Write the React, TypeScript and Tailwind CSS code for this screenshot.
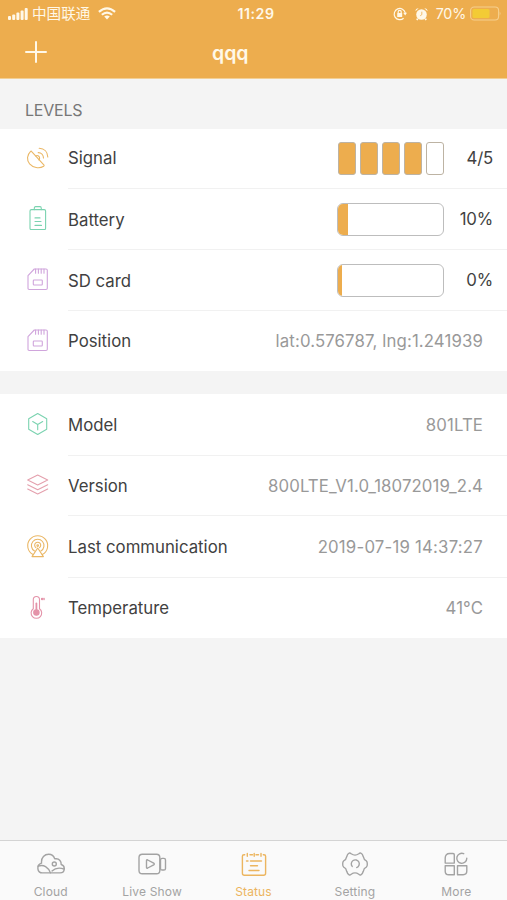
import type { ReactNode } from "react";

const ORANGE = "#edad4e";

function Icon({ color, children }: { color: string; children: ReactNode }) {
  return (
    <svg
      className="-mt-[3px] size-6 shrink-0"
      viewBox="0 0 24 24"
      fill="none"
      stroke={color}
      strokeWidth="1.1"
      strokeLinecap="round"
      strokeLinejoin="round"
    >
      {children}
    </svg>
  );
}

const DishIcon = () => (
  <Icon color="#eab765">
    <path d="M4.6 5.4C1 9 .4 14 3.600 17.800C7 21.600 13 23 17.700 20.200C18.300 19.800 18.200 19.400 17.800 18.900L5.700 5.600C5.300 5.100 5 5 4.600 5.400Z" />
    <path d="M9.800 9.900C11.600 8.600 14 10.500 13.600 12.600C13.500 13.200 13.300 13.600 12.900 13.900" />
    <path d="M12.200 6.600C15.300 6.600 17.400 9 17.500 12" />
    <path d="M13.200 2.300C18.300 2.600 21.700 6 21.800 10.900" />
  </Icon>
);

const BatteryIcon = () => (
  <Icon color="#7bd3b0">
    <rect x="4" y="3.600" width="15.600" height="20" rx="1.400" />
    <path d="M8.300 3.600V2.400Q8.300.6 9.600.6H14Q15.300.6 15.300 2.400V3.600M9 11.900H14M9 15.500H15M9 19.400H15.500" />
  </Icon>
);

const CardIcon = () => (
  <Icon color="#d0a5dc">
    <path d="M8.300 2H20Q21.300 2 21.300 3.300V21.300Q21.300 22.500 20 22.500H3.200Q2 22.500 2 21.300V8.700Z" />
    <path d="M9.600 2V6.300M12.400 2V6.300M15.200 2V6.300M18 2V6.300" />
    <rect x="7.300" y="13" width="9" height="5" rx=".7" />
  </Icon>
);

const BoxIcon = () => (
  <Icon color="#7bd3b0">
    <path d="M11.700 1.600L20.700 6.800V17.200L11.700 22.400L2.700 17.200V6.800Z" />
    <path d="M6.700 9.600L11.700 12.500L16.700 9.600M11.700 12.500V17.800" />
  </Icon>
);

const LayersIcon = () => (
  <Icon color="#e4a0ad">
    <path d="M11.700 2L21.700 7L11.700 12L1.700 7Z" />
    <path d="M1.700 11.700L11.700 16.700L21.700 11.700M1.700 16L11.700 21L21.700 16" />
  </Icon>
);

const AntennaIcon = () => (
  <Icon color="#eab765">
    <path d="M7.100 20.600A10 10 0 1 1 16.300 20.600" />
    <path d="M8.500 17A6.300 6.300 0 1 1 14.900 17" />
    <path d="M9.900 13.600A3 3 0 1 1 13.500 13.600" />
    <circle cx="11.700" cy="11.600" r=".8" />
    <path d="M11.700 14L17.400 22.600H6Z" />
  </Icon>
);

const ThermometerIcon = () => (
  <Icon color="#e493a9">
    <path d="M7.300 13.700V4.600A3.100 3.100 0 0 1 13.500 4.600V13.700A5.300 5.300 0 1 1 7.300 13.700Z" />
    <circle cx="10.400" cy="17.500" r="2.700" fill="#e493a9" />
    <path d="M10.400 8.500V15" strokeWidth="1.800" />
    <circle cx="16.100" cy="4" r=".7" />
    <path d="M17.800 3.400H18.200V4.600H17.800" />
  </Icon>
);

function Row({ icon, label, height, line = true, children }: {
  icon: ReactNode;
  label: string;
  height: string;
  line?: boolean;
  children: ReactNode;
}) {
  return (
    <div className={`flex items-center pl-[26px] ${height}`}>
      {icon}
      <div
        className={`ml-[18px] flex h-full flex-1 items-center justify-between border-b ${line ? "border-[#f1f1f1]" : "border-transparent"}`}
      >
        <span className={`text-[16.800px] text-[#414141] ${label === "Signal" ? "pt-px" : "pt-[3px]"}`}>{label}</span>
        {children}
      </div>
    </div>
  );
}

const Value = ({ children, spacing }: { children: ReactNode; spacing: string }) => (
  <span className={`pt-[3px] pr-[24px] text-[16.800px] text-[#999] ${spacing}`}>{children}</span>
);

const Level = ({ children }: { children: ReactNode }) => (
  <span className="w-[63px] pt-px pr-[14px] text-right text-[16.800px] tracking-[-0.200px] text-[#414141]">{children}</span>
);

function Gauge({ fill }: { fill: string }) {
  return (
    <div className="ml-auto h-[33px] w-[107px] overflow-hidden rounded-[6px] border border-[#bdbdbd]">
      <div className={`h-full bg-[#edad4e] ${fill}`} />
    </div>
  );
}

function Tab({ label, active, children }: { label: string; active?: boolean; children: ReactNode }) {
  return (
    <div className={`flex flex-1 flex-col items-center pt-[9px] ${active ? "text-[#ecb55f]" : "text-[#a3a3a3]"}`}>
      <svg
        className="h-7 w-8"
        viewBox="0 0 32 28"
        fill="none"
        stroke="currentColor"
        strokeWidth="1.400"
        strokeLinecap="round"
        strokeLinejoin="round"
      >
        {children}
      </svg>
      <span className="mt-[6px] text-[12px] leading-[16px] tracking-[0.150px]">{label}</span>
    </div>
  );
}

export default function App() {
  return (
    <div className="flex h-[900px] w-[507px] flex-col overflow-hidden bg-[#f4f4f4] font-['Inter','Noto_Sans_CJK_SC',sans-serif]">
      <header className="h-[79px] shrink-0 border-b border-[#f3cf94] bg-[#edad4e] text-[#fff8e8]">
        <div className="grid h-[27px] grid-cols-3 items-center pr-[6px] pl-2">
          <div className="flex items-center">
            <svg className="mr-1 h-3 w-5" viewBox="0 0 20 12" fill="currentColor">
              <rect x="0" y="8" width="3" height="4" rx="1" />
              <rect x="4.200" y="6.500" width="3" height="5.500" rx="1" />
              <rect x="8.400" y="4.500" width="3" height="7.500" rx="1" />
              <rect x="12.600" y="2.500" width="3" height="9.500" rx="1" />
              <rect x="16.700" y="0" width="3" height="12" rx="1" />
            </svg>
            <span className="text-[14.600px] leading-5 whitespace-nowrap">中国联通</span>
            <svg className="ml-2 h-[13px] w-[18px]" viewBox="0 0 18 13" fill="none" stroke="currentColor" strokeWidth="2.100">
              <path d="M.9 4.900Q9-2.200 17.100 4.900M3.800 7.800Q9 3.300 14.200 7.800" />
              <path d="M6.200 9.600Q9 7.400 11.800 9.600L9 12.400Z" fill="currentColor" stroke="none" />
            </svg>
          </div>
          <span className="pt-px pl-[3px] text-center text-[14.200px] font-semibold tracking-[0.500px]">11:29</span>
          <div className="flex items-center justify-end">
            <svg className="mr-[8px] size-[14px]" viewBox="0 0 14 14" fill="none" stroke="currentColor" strokeWidth="1.200">
              <path d="M12.300 6A5.600 5.600 0 1 0 10.600 11.200" />
              <path d="M10.200 5.700H14L12.200 8.500Z" fill="currentColor" stroke="none" />
              <rect x="4.200" y="6" width="5" height="4" rx=".5" fill="currentColor" stroke="none" />
              <path d="M5.200 6V4.800A1.500 1.500 0 0 1 8.200 4.800V6" />
            </svg>
            <svg className="mr-[8px] h-[14px] w-[13px]" viewBox="0 0 13 14" fill="currentColor">
              <circle cx="6.500" cy="7.500" r="5.300" />
              <path d="M.5 4.200Q.4 1.300 3.700 1.200ZM12.500 4.200Q12.600 1.300 9.300 1.200ZM2 11L3.500 12.500L2.300 13.500L1.200 12.500ZM11 11L9.500 12.500L10.700 13.500L11.800 12.500Z" />
              <path d="M6.800 4.700V7.700L5.200 8.800" fill="none" stroke={ORANGE} strokeWidth=".8" />
            </svg>
            <span className="pt-px text-[14.300px] tracking-[-0.200px]">70%</span>
            <svg className="ml-1 h-[15px] w-[31px]" viewBox="0 0 31 15" fill="none">
              <rect x=".6" y="1" width="28" height="13" rx="3.500" stroke="#f6cf8d" strokeWidth="1.100" />
              <rect x="2.500" y="3" width="17" height="9" rx="1.500" fill="#f3cb35" />
              <path d="M29.700 5.400Q31.200 7.500 29.700 9.600Z" fill="#f6cf8d" />
            </svg>
          </div>
        </div>
        <div className="flex h-[50px] items-center">
          <svg className="ml-[25px] size-[22px]" viewBox="0 0 22 22" stroke="currentColor" strokeWidth="2" strokeLinecap="round">
            <path d="M11 1V21M1 11H21" />
          </svg>
          <h1 className="ml-[165px] pt-[3px] text-[19.500px] font-semibold">qqq</h1>
        </div>
      </header>

      <main className="flex-1">
        <h2 className="flex h-[50px] items-center pt-[12px] pl-[25px] text-[16px] tracking-[-0.200px] text-[#777]">LEVELS</h2>
        <section className="bg-white">
          <Row icon={<DishIcon />} label="Signal" height="h-[60px]">
            <div className="ml-auto flex gap-[4px]">
              {[1, 2, 3, 4, 5].map((n) => (
                <i
                  key={n}
                  className={`h-[33px] w-[18px] rounded-[3px] border border-[#bdb3a3] ${n < 5 ? "bg-[#edad4e]" : "bg-white"}`}
                />
              ))}
            </div>
            <Level>4/5</Level>
          </Row>
          <Row icon={<BatteryIcon />} label="Battery" height="h-[61px]">
            <Gauge fill="w-[10px]" />
            <Level>10%</Level>
          </Row>
          <Row icon={<CardIcon />} label="SD card" height="h-[61px]">
            <Gauge fill="w-[4px]" />
            <Level>0%</Level>
          </Row>
          <Row icon={<CardIcon />} label="Position" height="h-[60px]" line={false}>
            <Value spacing="tracking-[0.120px]">lat:0.576787, lng:1.241939</Value>
          </Row>
        </section>
        <section className="mt-[23px] bg-white">
          <Row icon={<BoxIcon />} label="Model" height="h-[62px]">
            <Value spacing="tracking-[0.100px]">801LTE</Value>
          </Row>
          <Row icon={<LayersIcon />} label="Version" height="h-[60px]">
            <Value spacing="tracking-[0.080px]">800LTE_V1.0_18072019_2.4</Value>
          </Row>
          <Row icon={<AntennaIcon />} label="Last communication" height="h-[62px]">
            <Value spacing="tracking-[0.200px]">2019-07-19 14:37:27</Value>
          </Row>
          <Row icon={<ThermometerIcon />} label="Temperature" height="h-[60px]" line={false}>
            <Value spacing="tracking-[0.100px]">41°C</Value>
          </Row>
        </section>
      </main>

      <nav className="flex h-[60px] shrink-0 border-t border-[#d4d4d4] bg-[#fafafa]">
        <Tab label="Cloud">
          <path d="M6.500 13.200C3.900 14 2.600 16.100 2.900 18.800C3.200 21.400 5 22.900 7.600 22.900H25C27.500 22.900 29.200 21.200 29.300 18.700C29.300 16.500 27.800 14.900 26.200 14.500C26.400 11.300 24.300 8.800 21.200 8.800H19.700C18.800 6 16.800 4.300 13.700 4.300C9.400 4.300 6.400 7.600 6.500 11.800Z" />
          <path d="M3.200 16.200C8.500 13.900 13.500 17.300 15.400 22.900M17 20.900C20.500 17.700 25.100 17.700 29 19" />
          <circle cx="19.300" cy="14" r="2" />
        </Tab>
        <Tab label="Live Show">
          <rect x="3" y="4.300" width="20.800" height="19.500" rx="3.300" />
          <path d="M10.500 10.700V17.300Q10.500 18.600 11.700 18L17.700 14.800Q18.900 14 17.700 13.200L11.700 10Q10.500 9.400 10.500 10.700Z" />
          <rect x="24.500" y="8.400" width="5" height="11.600" rx="1.600" />
        </Tab>
        <Tab label="Status" active>
          <path d="M6.700 4.700H6Q4.400 4.700 4.400 6.300V23.200Q4.400 25.200 6.400 25.200H25.600Q27.600 25.200 27.600 23.200V6.300Q27.600 4.700 26 4.700H25.300M12 4.700H14.500M18 4.700H20.500" />
          <path d="M9.300 3.500V6.300M16.200 3.500V6.300M23 3.500V6.300M8.500 11H10M12.500 11H23.500M12.500 15.800H19.500M11 20.500H21" />
        </Tab>
        <Tab label="Setting">
          <path d="M10.100 3.200Q11 2.700 12.200 3.800Q16 6.500 19.800 3.800Q21 2.700 21.900 3.200Q23.600 4 24.300 6.700Q24.800 9.700 27.300 10.800Q28.400 11.500 28.300 14Q28.400 16.500 27.300 17.200Q24.800 18.300 24.300 21.300Q23.600 24 21.900 24.800Q21 25.300 19.800 24.200Q16 21.500 12.200 24.200Q11 25.300 10.100 24.800Q8.400 24 7.700 21.300Q7.200 18.300 4.700 17.200Q3.600 16.500 3.700 14Q3.600 11.500 4.700 10.800Q7.200 9.700 7.700 6.700Q8.400 4 10.100 3.200Z" />
          <path d="M13.200 16.400A4 4 0 1 1 17.700 17.600" />
        </Tab>
        <Tab label="More">
          <path d="M5.200 13.100V8Q5.200 3.500 9.700 3.500H13Q14.300 3.500 14.300 4.800V13.100Z" />
          <path d="M23.700 3.700A5 5 0 1 0 26.800 8.300" />
          <path d="M5.200 15.800H14.300V24.700H8.700Q5.200 24.700 5.200 21.200ZM17.500 15.800H26.800V21Q26.800 24.700 23.100 24.700H17.500Z" />
        </Tab>
      </nav>
    </div>
  );
}
